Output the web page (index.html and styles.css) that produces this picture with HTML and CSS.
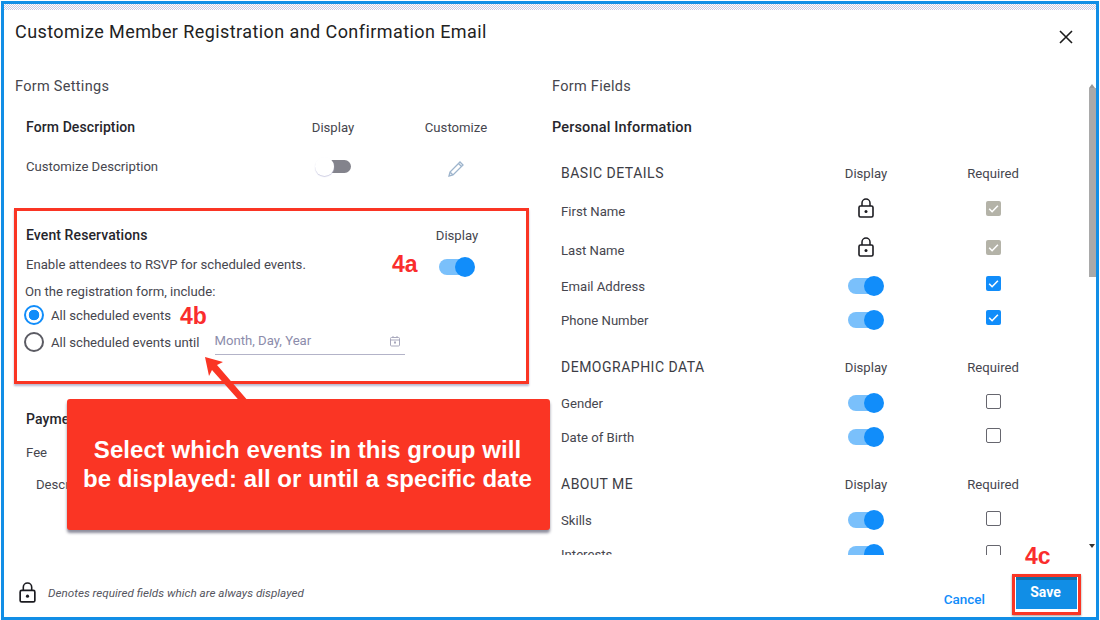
FILE: index.html
```html
<!DOCTYPE html>
<html lang="en">
<head>
<meta charset="utf-8">
<title>Customize Member Registration and Confirmation Email</title>
<link rel="stylesheet" href="styles.css">
</head>
<body>
<svg class="defs" width="0" height="0" aria-hidden="true">
  <symbol id="lock" viewBox="0 0 16 20">
    <path d="M4 8V5a4 4 0 0 1 8 0v3" fill="none" stroke="currentColor" stroke-width="1.5"/>
    <rect x="1" y="8" width="14" height="11" rx="1.5" fill="none" stroke="currentColor" stroke-width="1.6"/>
    <circle cx="8" cy="13.5" r="1.5" fill="currentColor"/>
  </symbol>
  <symbol id="tick" viewBox="0 0 15 15">
    <path d="M3.2 7.8l2.9 2.9 5.8-6" fill="none" stroke="#fff" stroke-width="1.6"/>
  </symbol>
</svg>
<main class="modal">
  <div class="modal-shade"></div>
  <header class="modal-header">
    <h1 class="modal-title">Customize Member Registration and Confirmation Email</h1>
    <svg class="close" viewBox="0 0 14 14" width="14" height="14"><path d="M1 1l12 12M13 1L1 13" stroke="#1c1c1c" stroke-width="1.6" fill="none"/></svg>
  </header>
  <div class="modal-body">
    <section class="col-left">
      <h2 class="section-title">Form Settings</h2>
      <div class="set-row set-head">
        <strong class="strong">Form Description</strong>
        <span class="cell">Display</span>
        <span class="cell">Customize</span>
      </div>
      <div class="set-row set-second">
        <span>Customize Description</span>
        <span class="cell"><span class="toggle-off"><i></i></span></span>
        <span class="cell">
          <svg class="pencil" viewBox="0 0 20 20" width="20" height="20"><path d="M3 17l1-4L14 3l3 3L7 16z M12.5 4.5l3 3 M4 13l3 3" fill="none" stroke="#9db4cc" stroke-width="1.3"/></svg>
        </span>
      </div>
      <div class="event">
        <strong class="strong">Event Reservations</strong>
        <span class="cell event-display">Display</span>
        <span class="event-enable">Enable attendees to RSVP for scheduled events.</span>
        <span class="cell event-toggle"><span class="toggle-on"><i></i></span></span>
        <span class="event-include">On the registration form, include:</span>
        <div class="radio-row radio-first"><span class="radio on"></span><span>All scheduled events</span></div>
        <div class="radio-row radio-second">
          <span class="radio"></span><span>All scheduled events until</span>
          <div class="date">
            <span>Month, Day, Year</span>
            <svg viewBox="0 0 12 12" width="12" height="12"><rect x="1.5" y="2.5" width="9" height="8.5" rx="1" fill="none" stroke="#a9a9bd"/><path d="M1.5 5h9M4 1v2M8 1v2" stroke="#a9a9bd"/><rect x="5" y="6.5" width="2" height="2" fill="#a9a9bd"/></svg>
          </div>
        </div>
      </div>
      <div class="set-row set-pay"><strong class="strong">Payment</strong></div>
      <div class="set-row set-fee"><span>Fee</span></div>
      <div class="set-row set-desc"><span>Description</span></div>
    </section>
    <section class="col-right">
      <h2 class="section-title section-title-right">Form Fields</h2>
      <strong class="strong personal">Personal Information</strong>

      <div class="f-row f-head f-first"><span class="group">BASIC DETAILS</span><span class="cell">Display</span><span class="cell">Required</span></div>
      <div class="f-row f-tall"><span class="lbl">First Name</span><span class="cell up3"><svg class="lock"><use href="#lock"/></svg></span><span class="cell up"><span class="check grey"><svg><use href="#tick"/></svg></span></span></div>
      <div class="f-row f-tall"><span class="lbl">Last Name</span><span class="cell up3"><svg class="lock"><use href="#lock"/></svg></span><span class="cell up"><span class="check grey"><svg><use href="#tick"/></svg></span></span></div>
      <div class="f-row"><span class="lbl">Email Address</span><span class="cell"><span class="toggle-on"><i></i></span></span><span class="cell up3"><span class="check blue"><svg><use href="#tick"/></svg></span></span></div>
      <div class="f-row"><span class="lbl">Phone Number</span><span class="cell"><span class="toggle-on"><i></i></span></span><span class="cell up3"><span class="check blue"><svg><use href="#tick"/></svg></span></span></div>

      <div class="f-row f-head f-group"><span class="group">DEMOGRAPHIC DATA</span><span class="cell">Display</span><span class="cell">Required</span></div>
      <div class="f-row"><span class="lbl">Gender</span><span class="cell"><span class="toggle-on"><i></i></span></span><span class="cell up"><span class="check"></span></span></div>
      <div class="f-row"><span class="lbl">Date of Birth</span><span class="cell"><span class="toggle-on"><i></i></span></span><span class="cell up"><span class="check"></span></span></div>

      <div class="f-row f-head f-group2"><span class="group">ABOUT ME</span><span class="cell">Display</span><span class="cell">Required</span></div>
      <div class="f-row"><span class="lbl">Skills</span><span class="cell"><span class="toggle-on"><i></i></span></span><span class="cell up"><span class="check"></span></span></div>
      <div class="f-row"><span class="lbl">Interests</span><span class="cell"><span class="toggle-on"><i></i></span></span><span class="cell up"><span class="check"></span></span></div>
    </section>
    <div class="scrollbar"><b class="arrow-up"></b><span class="thumb"></span><b class="arrow-down"></b></div>
  </div>
  <footer class="modal-footer">
    <svg class="lock foot-lock"><use href="#lock"/></svg>
    <em class="note">Denotes required fields which are always displayed</em>
    <span class="cancel">Cancel</span>
    <span class="save-ring"><span class="save">Save</span></span>
  </footer>

  <div class="callout">Select which events in this group will<br>be displayed: all or until a specific date</div>
  <svg class="arrow" viewBox="0 0 60 54" width="60" height="54"><path d="M3 2l18 5-6 3 32 37-5 4-32-36-3 6z" fill="#fa3524"/></svg>
  <span class="tag tag-a">4a</span>
  <span class="tag tag-b">4b</span>
  <span class="tag tag-c">4c</span>
</main>
</body>
</html>
```

FILE: styles.css
```css
* { box-sizing: border-box; }
html, body { margin: 0; padding: 0; background: #fff; }
body { width: 1100px; height: 620px; overflow: hidden; font-family: Roboto, "Liberation Sans", sans-serif; font-size: 13.15px; color: #46464e; }
.defs { position: absolute; }
.modal { position: relative; width: 1098px; height: 619px; margin: 1px 0 0 1px; border: 3px solid #118ee6; background: #fff; display: flex; flex-direction: column; }
.modal-shade { position: absolute; left: 0; right: 0; top: 0; height: 6px; background: repeating-conic-gradient(#c9c9e2 0 25%, #fff 0 50%) 0 0 / 2px 2px; }
.modal-header { flex: none; height: 54px; padding: 0 0 0 11px; display: flex; align-items: center; justify-content: space-between; }
.modal-title { margin: 0; font-size: 18px; font-weight: 400; color: #222; letter-spacing: .42px; }
.close { margin: 12px 23px 0 0; }
.modal-body { flex: none; height: 497px; overflow: hidden; display: flex; }
.col-left { flex: none; width: 518px; margin-left: 10px; }
.col-right { flex: none; width: 518px; margin-left: 20px; }
.section-title { margin: 17px 0 0 1px; height: 24px; line-height: 24px; font-size: 14.5px; font-weight: 400; color: #46464e; letter-spacing: .3px; }
.section-title-right { margin-left: 0; }
.strong { font-size: 14px; font-weight: 500; color: #26262c; letter-spacing: .1px; }
.cell { display: flex; justify-content: center; align-items: center; }
.set-row { display: grid; grid-template-columns: 257px 100px 146px; padding-left: 12px; height: 24px; align-items: center; }
.set-head { margin-top: 16px; }
.set-second { margin-top: 15px; }
.set-second .toggle-off { position: relative; }
.pencil { margin-top: 5px; }
.event { width: 515px; height: 176px; margin-top: 30px; border: 3px solid #fa3524; padding: 12px 19px 0 9px; display: grid; grid-template-columns: 1fr 100px; grid-template-rows: 24px 34px 20px 28px 26px; align-content: start; align-items: center; box-shadow: 0 2px 2px #b9b9cf; }
.event-toggle { position: relative; top: 3px; }
.event-include { grid-column: 1 / -1; margin-left: -1px; }
.radio-row { grid-column: 1 / -1; display: flex; align-items: center; margin-left: -2px; }
.radio { flex: none; width: 20px; height: 20px; border-radius: 50%; border: 2px solid #5b5b63; margin-right: 7px; }
.radio.on { border-color: #118dfa; background: radial-gradient(circle, #118dfa 0 5px, #fff 5.6px); }
.date { width: 190px; height: 25px; margin-left: 15px; padding: 0 4px 2px 0; border-bottom: 1px solid #b3b3c8; color: #8c8cab; display: flex; justify-content: space-between; align-items: center; }
.set-pay { margin-top: 23px; }
.set-fee { margin-top: 9px; }
.set-desc { margin-top: 8px; padding-left: 22px; }
.toggle-off { position: relative; display: block; width: 36px; height: 13px; }
.toggle-off::before { content: ""; position: absolute; right: 0; top: 0; width: 26px; height: 13px; border-radius: 7px; background: #83838c; }
.toggle-off i { position: absolute; left: 0; top: -3px; width: 19px; height: 19px; border-radius: 50%; background: #fff; box-shadow: 0 1px 1px #cfcfe4; }
.toggle-on { position: relative; display: block; width: 36px; height: 20px; }
.toggle-on::before { content: ""; position: absolute; left: 0; top: 2px; width: 28px; height: 16px; border-radius: 8px; background: #7ac0fb; }
.toggle-on i { position: absolute; right: 0; top: 0; width: 20px; height: 20px; border-radius: 50%; background: #118dfa; }
.personal { display: block; height: 24px; line-height: 24px; margin-top: 17px; font-size: 14.5px; letter-spacing: .15px; }
.f-row { display: grid; grid-template-columns: 255px 100px 154px; padding-left: 9px; height: 34px; align-items: center; }
.f-tall { height: 39px; }
.f-tall .lbl { position: relative; top: 1px; }
.f-head { height: 24px; }
.f-first { margin: 21px 0 6px; }
.f-group { margin: 18px 0 7px; }
.f-group2 { margin: 18px 0 7px; }
.group { font-size: 14px; letter-spacing: .5px; color: #3c3c44; }
.up { position: relative; top: -2px; }
.up3 { position: relative; top: -3px; }
.lock { width: 16px; height: 20px; color: #1b1b20; }
.check { display: block; width: 15px; height: 15px; border: 1.5px solid #66666e; border-radius: 2px; }
.check svg { display: block; width: 15px; height: 15px; }
.check.grey { background: #b4b3a8; border: 0; }
.check.blue { background: #118dfa; border: 0; }
.scrollbar { flex: none; position: relative; width: 7px; height: 470px; margin: 23px 0 0 19px; }
.thumb { position: absolute; left: 0; right: 0; top: 7px; height: 189px; background: #a9a9a9; }
.arrow-up, .arrow-down { position: absolute; left: 0; width: 0; height: 0; border: 3.5px solid transparent; }
.arrow-up { top: 0; border-bottom: 4px solid #999; }
.arrow-down { bottom: 0; border-top: 4px solid #333; }
.modal-footer { flex: 1; position: relative; display: flex; align-items: center; padding: 0 0 0 15px; }
.foot-lock { width: 17px; height: 21px; position: relative; top: 6px; }
.note { margin-left: 12px; font-size: 11.7px; color: #55555e; position: relative; top: 7px; }
.cancel { margin-left: auto; margin-right: 27px; color: #118dfa; font-size: 13.5px; font-weight: 500; position: relative; top: 13px; }
.save-ring { display: block; width: 69px; height: 41px; margin-right: 15px; margin-top: 17px; border: 3px solid #fa3524; padding: 0 1px 3px; box-shadow: 0 1px 2px #999; }
.save { display: flex; width: 100%; height: 100%; padding: 0 2px 5px 0; align-items: center; justify-content: center; background: #118ee6; border-top: 3px solid #0f6fa8; color: #fff; font-size: 14px; font-weight: 700; }
.callout { position: absolute; left: 63px; top: 395px; width: 483px; height: 131px; background: #fa3524; border-radius: 3px; box-shadow: 0 3px 3px #8d8d9c; color: #fff; font-family: "Liberation Sans", Arial, sans-serif; font-size: 24px; font-weight: 700; line-height: 29px; letter-spacing: .05px; text-align: center; padding: 36px 2px 0 0; }
.arrow { position: absolute; left: 198px; top: 351px; }
.tag { position: absolute; color: #fa2d2d; font-family: "Liberation Sans", Arial, sans-serif; font-size: 23px; font-weight: 700; line-height: 26px; }
.tag-a { left: 388px; top: 247px; }
.tag-b { left: 176px; top: 299px; }
.tag-c { left: 1021px; top: 539px; }
```
